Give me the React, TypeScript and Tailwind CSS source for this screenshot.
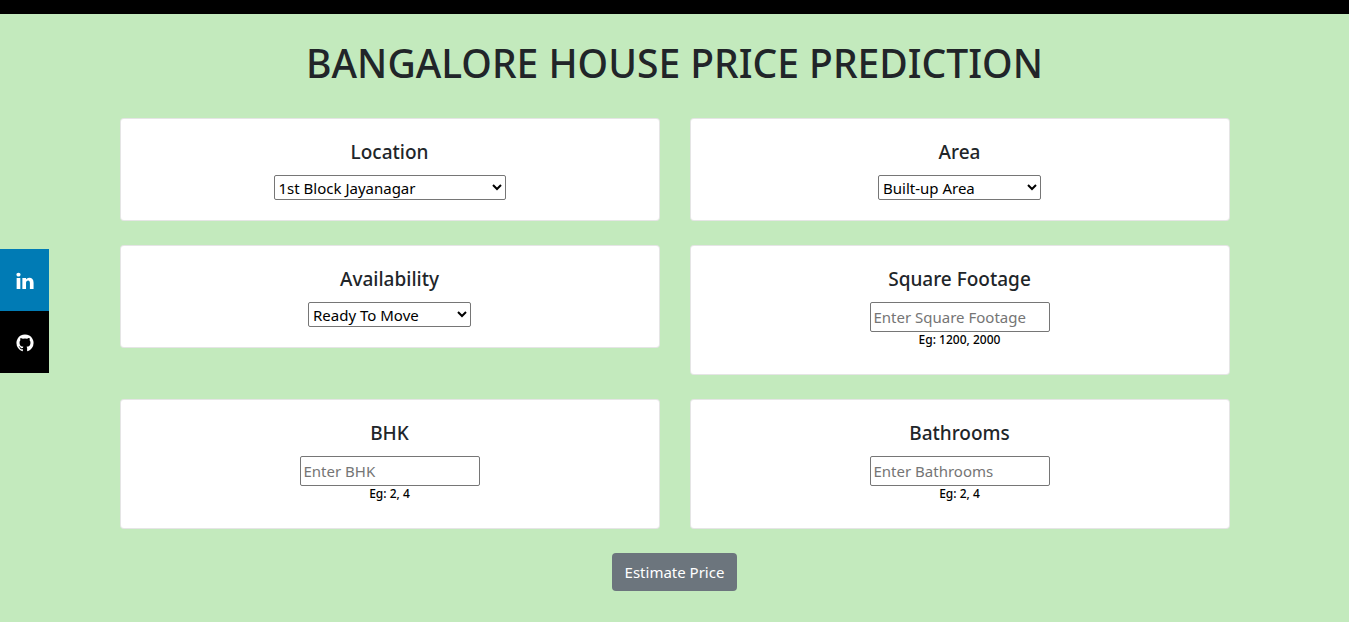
import type { ReactNode } from "react";

const LINKEDIN_PATH =
  "M477 625v991h-330v-991h330zm21-306q1 73-50.5 122t-135.5 49h-2q-82 0-132-49t-50-122q0-74 51.5-122.5t134.5-48.5 133 48.5 51 122.5zm1166 729v568h-329v-530q0-105-40.5-164.5t-126.5-59.5q-63 0-105.5 34.5t-63.5 85.5q-11 30-11 81v553h-329q2-399 2-647t-1-296l-1-48h329v144h-2q20-32 41-56t56.5-52 87-43.5 114.5-15.5q171 0 275 113.5t104 332.5z";

const GITHUB_PATH =
  "M896 128q209 0 385.5 103t279.5 279.5 103 385.5q0 251-146.5 451.5t-378.5 277.5q-27 5-40-7t-13-30q0-3 .5-76.5t.5-134.5q0-97-52-142 57-6 102.5-18t94-39 81-66.5 53-105 20.5-150.5q0-119-79-206 37-91-8-204-28-9-81 11t-92 44l-38 24q-93-26-192-26t-192 26q-16-11-42.5-27t-83.5-38.5-85-13.5q-45 113-8 204-79 87-79 206 0 85 20.5 150t52.5 105 80.5 67 94 39 102.5 18q-39 36-49 103-21 10-45 15t-57 5-65.5-21.5-55.5-62.5q-19-32-48.5-52t-49.5-24l-20-3q-21 0-29 4.5t-5 11.5 9 14 13 12l7 5q22 10 43.5 38t31.5 51l10 23q13 38 44 61.5t67 30 69.5 7 55.5-3.5l23-4q0 38 .5 88.5t.5 54.5q0 18-13 30t-40 7q-232-77-378.5-277.5t-146.5-451.5q0-209 103-385.5t279.5-279.5 385.5-103z";

function Icon({ path }: { path: string }) {
  return (
    <svg viewBox="0 0 1792 1792" fill="currentColor" aria-hidden="true" className="size-5">
      <path d={path} />
    </svg>
  );
}

type FieldProps = { id: string; label: string; children: ReactNode };

function FieldCard({ id, label, children }: FieldProps) {
  return (
    <div className="flex flex-col items-center rounded border border-black/10 bg-white px-5 pt-[21px] pb-5">
      <label htmlFor={id} className="mb-[11px] text-[19px] leading-6 font-medium text-[#212529]">
        {label}
      </label>
      {children}
    </div>
  );
}

type SelectProps = { id: string; options: string[]; wide?: boolean };

function Select({ id, options, wide }: SelectProps) {
  return (
    <select
      id={id}
      className={`h-[25px] rounded-[2px] border border-[#767676] bg-white text-[15px] font-normal text-black ${wide ? "w-[232px]" : "w-[163px]"}`}
    >
      {options.map((option) => (
        <option key={option}>{option}</option>
      ))}
    </select>
  );
}

type TextInputProps = { id: string; placeholder: string; hint: string };

function TextInput({ id, placeholder, hint }: TextInputProps) {
  return (
    <>
      <input
        id={id}
        type="text"
        placeholder={placeholder}
        aria-describedby={`${id}-hint`}
        className="h-[30px] w-[180px] rounded-[2px] border border-[#767676] bg-white px-[3px] text-[15px] font-normal text-black placeholder:text-[#757575]"
      />
      <small id={`${id}-hint`} className="mb-1.5 text-[12px] leading-4 font-medium text-black">
        {hint}
      </small>
    </>
  );
}

export default function App() {
  return (
    <div className="min-h-screen bg-[#c3eabd] font-['Noto_Sans','Open_Sans',sans-serif]">
      <div className="h-3.5 bg-black" />

      <nav aria-label="Social links" className="fixed top-1/2 left-0 flex -translate-y-1/2 flex-col text-white">
        <a href="#linkedin" aria-label="LinkedIn" className="flex h-[62px] w-[49px] items-center justify-center bg-[#007bb5] pt-0.5">
          <Icon path={LINKEDIN_PATH} />
        </a>
        <a href="#github" aria-label="GitHub" className="flex h-[62px] w-[49px] items-center justify-center bg-black pt-0.5">
          <Icon path={GITHUB_PATH} />
        </a>
      </nav>

      <main className="mx-auto max-w-[1140px] px-[15px] pt-[25px] pb-8">
        <h1 className="mb-[31px] text-center text-[39px] leading-12 font-medium text-[#212529]">
          BANGALORE HOUSE PRICE PREDICTION
        </h1>
        <form>
          <div className="grid grid-cols-1 items-start gap-x-[30px] gap-y-6 md:grid-cols-2">
            <FieldCard id="location" label="Location">
              <Select id="location" options={["1st Block Jayanagar"]} wide />
            </FieldCard>
            <FieldCard id="area" label="Area">
              <Select id="area" options={["Built-up Area"]} />
            </FieldCard>
            <FieldCard id="availability" label="Availability">
              <Select id="availability" options={["Ready To Move"]} />
            </FieldCard>
            <FieldCard id="sqft" label="Square Footage">
              <TextInput id="sqft" placeholder="Enter Square Footage" hint="Eg: 1200, 2000" />
            </FieldCard>
            <FieldCard id="bhk" label="BHK">
              <TextInput id="bhk" placeholder="Enter BHK" hint="Eg: 2, 4" />
            </FieldCard>
            <FieldCard id="bathrooms" label="Bathrooms">
              <TextInput id="bathrooms" placeholder="Enter Bathrooms" hint="Eg: 2, 4" />
            </FieldCard>
          </div>
          <div className="mt-6 flex justify-center">
            <button type="button" className="h-[38px] rounded bg-[#6c757d] px-[13px] text-[15px] text-white">
              Estimate Price
            </button>
          </div>
        </form>
      </main>
    </div>
  );
}
